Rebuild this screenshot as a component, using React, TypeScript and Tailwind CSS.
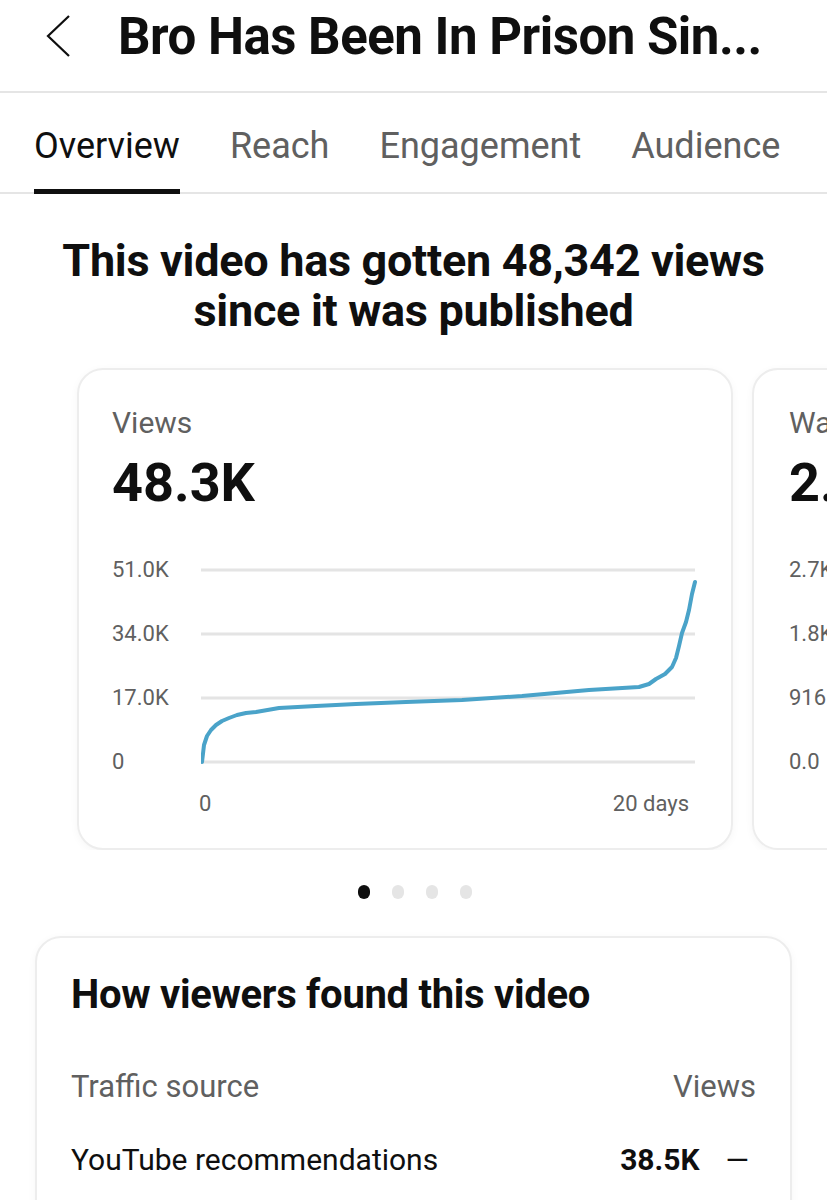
const curve: [number, number][] = [
  [1, 196], [3, 179], [6, 170], [10, 164], [15, 159], [21, 155], [28, 152],
  [36, 149], [45, 147], [55, 146], [78, 142], [115, 140], [155, 138],
  [205, 136], [261, 134], [321, 130], [388, 124], [438, 121], [448, 118],
  [455, 113], [464, 108], [471, 101], [475, 92], [478, 80], [481, 67],
  [485, 56], [488, 44], [491, 28], [494, 16],
];

const tabs = ["Overview", "Reach", "Engagement", "Audience"];

function Chart({ labels, cut }: { labels: string[]; cut?: boolean }) {
  const points = curve.map(([x, y]) => `${x},${y}`).join(" ");
  return (
    <div className="flex flex-col">
      <div className="flex">
        <div className="flex flex-col justify-between w-[89px] h-[216px] -my-[8px] text-[22px] leading-[24px] text-[#606060] shrink-0">
          {labels.map((l) => (
            <span key={l}>{l}</span>
          ))}
        </div>
        {!cut && (
          <svg width="496" height="200" viewBox="0 0 496 200" className="shrink-0">
            {[4, 68, 132, 196].map((y) => (
              <line key={y} x1="0" x2="494" y1={y} y2={y} stroke="#e4e4e4" strokeWidth="3" />
            ))}
            <polyline
              points={points}
              fill="none"
              stroke="#4aa3c9"
              strokeWidth="4"
              strokeLinejoin="round"
              strokeLinecap="round"
            />
          </svg>
        )}
      </div>
      {!cut && (
        <div className="flex justify-between pl-[87px] pr-[42px] mt-[26px] text-[22px] leading-[24px] text-[#606060]">
          <span>0</span>
          <span>20 days</span>
        </div>
      )}
    </div>
  );
}

export default function App() {
  return (
    <div className="w-[827px] h-[1200px] overflow-hidden bg-white text-[#0f0f0f] font-['Roboto',_'Liberation_Sans',_sans-serif]">
      {/* header */}
      <div className="flex items-start h-[93px] pl-[44px] pt-[12px] border-b-2 border-[#e5e5e5]">
        <svg width="28" height="44" viewBox="0 0 28 44" className="shrink-0 mt-[2px]">
          <path d="M25 2 L4 22 L25 42" fill="none" stroke="#0f0f0f" strokeWidth="2.2" />
        </svg>
        <h1 className="ml-[46px] text-[51px] leading-[50px] font-bold tracking-[-0.5px] whitespace-nowrap">
          Bro Has Been In Prison Sin...
        </h1>
      </div>

      {/* tabs */}
      <div className="flex gap-[50px] px-[34px] border-b-2 border-[#e5e5e5]">
        {tabs.map((t, i) => (
          <div
            key={t}
            className={`pt-[33px] pb-[23px] text-[36px] leading-[40px] border-b-[5px] -mb-[2px] ${
              i === 0 ? "border-[#0f0f0f] text-[#0f0f0f]" : "border-transparent text-[#606060]"
            }`}
          >
            {t}
          </div>
        ))}
      </div>

      {/* headline */}
      <div className="pt-[42px] text-center text-[45px] leading-[50px] font-bold tracking-[-0.3px]">
        <p>This video has gotten 48,342 views</p>
        <p>since it was published</p>
      </div>

      {/* carousel */}
      <div className="flex gap-[19px] pl-[77px] pt-[32px] overflow-hidden">
        <div className="w-[656px] h-[482px] shrink-0 rounded-[26px] border-2 border-[#ededed] shadow-[0_2px_8px_rgba(0,0,0,0.04)] pl-[33px] pt-[36px]">
          <p className="text-[30px] leading-[34px] text-[#606060]">Views</p>
          <p className="mt-[13px] text-[54px] leading-[60px] font-bold">48.3K</p>
          <div className="mt-[53px]">
            <Chart labels={["51.0K", "34.0K", "17.0K", "0"]} />
          </div>
        </div>
        <div className="w-[656px] h-[482px] shrink-0 rounded-[26px] border-2 border-[#ededed] shadow-[0_2px_8px_rgba(0,0,0,0.04)] pl-[35px] pt-[36px]">
          <p className="text-[30px] leading-[34px] text-[#606060]">Watch time (hours)</p>
          <p className="mt-[13px] text-[54px] leading-[60px] font-bold">2.1K</p>
          <div className="mt-[53px]">
            <Chart labels={["2.7K", "1.8K", "916", "0.0"]} cut />
          </div>
        </div>
      </div>

      {/* dots */}
      <div className="flex justify-center gap-[22px] pt-[35px] pl-[2px]">
        <span className="w-[12px] h-[14px] rounded-full bg-[#0f0f0f]" />
        <span className="w-[12px] h-[14px] rounded-full bg-[#e5e5e5]" />
        <span className="w-[12px] h-[14px] rounded-full bg-[#e5e5e5]" />
        <span className="w-[12px] h-[14px] rounded-full bg-[#e5e5e5]" />
      </div>

      {/* traffic card */}
      <div className="mx-[35px] mt-[37px] h-[300px] rounded-[26px] border-2 border-[#ededed] shadow-[0_2px_8px_rgba(0,0,0,0.04)] px-[34px] pt-[32px]">
        <h2 className="text-[40px] leading-[50px] font-bold tracking-[-0.3px]">How viewers found this video</h2>
        <div className="mt-[49px] flex justify-between text-[31px] leading-[36px] text-[#606060]">
          <span>Traffic source</span>
          <span>Views</span>
        </div>
        <div className="mt-[37px] flex items-center text-[30px] leading-[36px]">
          <span className="flex-1">YouTube recommendations</span>
          <span className="font-bold">38.5K</span>
          <span className="ml-[26px] mr-[7px]">—</span>
        </div>
      </div>
    </div>
  );
}
